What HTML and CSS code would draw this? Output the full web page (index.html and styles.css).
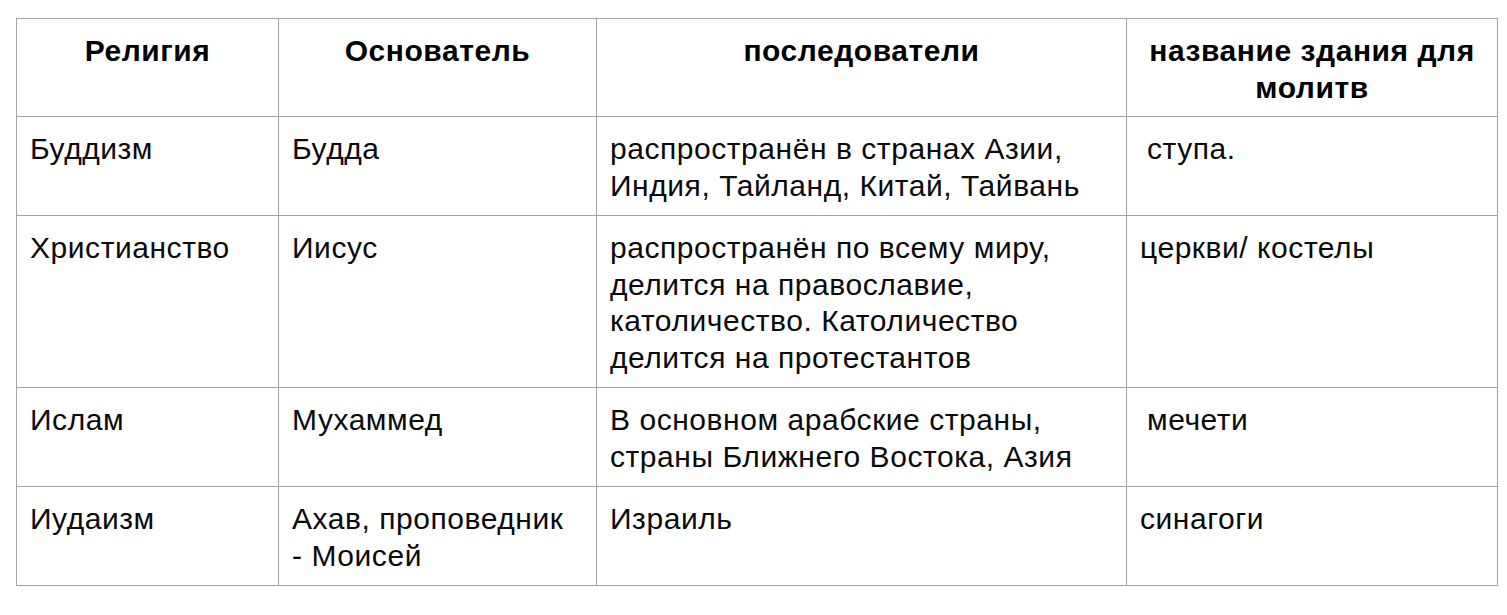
FILE: index.html
```html
<!DOCTYPE html>
<html lang="ru">
<head>
<meta charset="utf-8">
<link rel="stylesheet" href="styles.css">
</head>
<body>
<table class="grid">
  <colgroup>
    <col class="c1"><col class="c2"><col class="c3"><col class="c4">
  </colgroup>
  <thead>
    <tr class="head">
      <th>Религия</th>
      <th>Основатель</th>
      <th>последователи</th>
      <th>название здания для молитв</th>
    </tr>
  </thead>
  <tbody>
    <tr class="r1">
      <td>Буддизм</td>
      <td>Будда</td>
      <td>распространён в странах Азии, Индия, Тайланд, Китай, Тайвань</td>
      <td class="ind">ступа.</td>
    </tr>
    <tr class="r2">
      <td>Христианство</td>
      <td>Иисус</td>
      <td>распространён по всему миру, делится на православие, католичество. Католичество делится на протестантов</td>
      <td>церкви/ костелы</td>
    </tr>
    <tr class="r3">
      <td>Ислам</td>
      <td>Мухаммед</td>
      <td>В основном арабские страны, страны Ближнего Востока, Азия</td>
      <td class="ind">мечети</td>
    </tr>
    <tr class="r4">
      <td>Иудаизм</td>
      <td class="narrow">Ахав, проповедник - Моисей</td>
      <td>Израиль</td>
      <td>синагоги</td>
    </tr>
  </tbody>
</table>
</body>
</html>
```
FILE: styles.css
```css
html, body {
  margin: 0;
  padding: 0;
  background: #ffffff;
}
body {
  padding: 18px 0 0 16px;
  font-family: "Liberation Sans", Arial, Helvetica, sans-serif;
  color: #0a0a0a;
}
.grid {
  border-collapse: collapse;
  table-layout: fixed;
  width: 1481px;
}
.c1 { width: 262px; }
.c2 { width: 318px; }
.c3 { width: 530px; }
.c4 { width: 371px; }
.grid th,
.grid td {
  border: 1px solid #a3a3a3;
  vertical-align: top;
  text-align: left;
  font-size: 30px;
  letter-spacing: 0.55px;
  line-height: 36.5px;
  padding: 14px 10px 0 13px;
  box-sizing: border-box;
}
.grid th {
  font-weight: bold;
  text-align: center;
  line-height: 37px;
  padding: 13px 8px 0 8px;
  color: #000;
}
.grid td.narrow {
  padding-right: 24px;
}
.head { height: 98px; }
.r1 { height: 99px; }
.r2 { height: 172px; }
.r3 { height: 99px; }
.r4 { height: 99px; }
.grid td.ind {
  padding-left: 20px;
}
```
